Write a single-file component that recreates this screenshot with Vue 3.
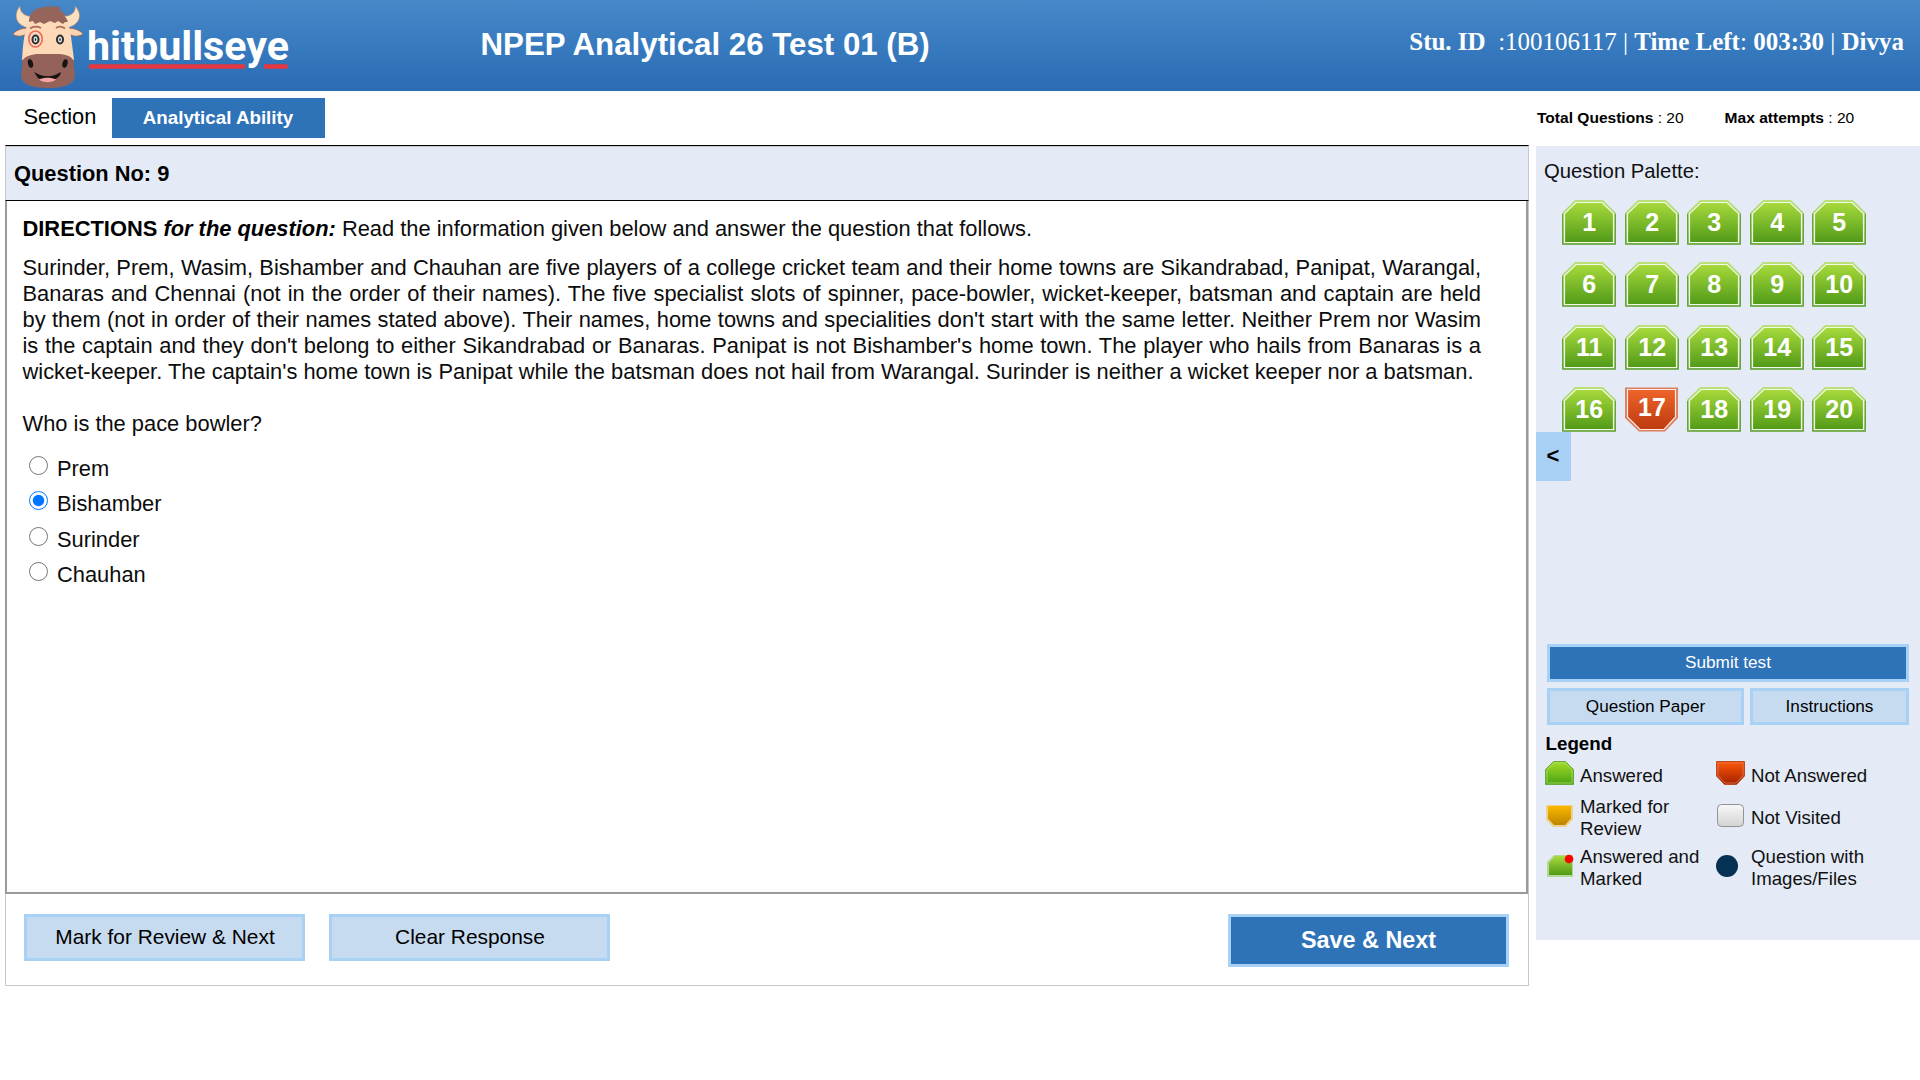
<script setup>
import { ref } from 'vue'

const questions = Array.from({ length: 20 }, (_, i) => ({
  no: i + 1,
  answered: i + 1 !== 17,
}))
const passage = [
  'Surinder, Prem, Wasim, Bishamber and Chauhan are five players of a college cricket team and their home towns are Sikandrabad, Panipat, Warangal,',
  'Banaras and Chennai (not in the order of their names). The five specialist slots of spinner, pace-bowler, wicket-keeper, batsman and captain are held',
  "by them (not in order of their names stated above). Their names, home towns and specialities don't start with the same letter. Neither Prem nor Wasim",
  "is the captain and they don't belong to either Sikandrabad or Banaras. Panipat is not Bishamber's home town. The player who hails from Banaras is a",
  "wicket-keeper. The captain's home town is Panipat while the batsman does not hail from Warangal. Surinder is neither a wicket keeper nor a batsman.",
]
const options = ['Prem', 'Bishamber', 'Surinder', 'Chauhan']
const chosen = ref('Bishamber')
</script>

<template>
  <div class="page">
    <header class="header">
      <svg class="logo" width="300" height="91" viewBox="0 0 300 91">
        <path d="M29 28C17 26 12 16 20 6C20 12 24 17 33 16L36 24Z" fill="#fbe0bf" stroke="#a9806c" stroke-width=".7" />
        <path d="M66 28C79 26 84 15 75 6C76 12 71 17 62 16L60 24Z" fill="#fbe0bf" stroke="#a9806c" stroke-width=".7" />
        <path d="M29 28C24 28 17 29 13 34C16 37 23 37 27 33Z" fill="#fcd2b1" stroke="#8e6257" stroke-width=".8" />
        <path d="M66 28C72 28 79 29 83 34C79 37 72 37 68 33Z" fill="#fcd2b1" stroke="#8e6257" stroke-width=".8" />
        <path d="M30 20C40 14 56 14 66 20C70 26 71 36 72 44L74 60H22C23 45 24 29 30 20Z" fill="#fdd9b8" />
        <path d="M29 22C29 16 31 12 35 11L34 9C37 10 39 8 41 6L41 9C44 6 47 7 51 5L50 8C54 6 57 6 61 8L59 10C62 11 64 13 66 15L63 15C66 17 67 19 68 22L65 22L63 24L58 21L55 23L50 21L44 24L40 22L35 24L33 21Z" fill="#95645a" />
        <path d="M30 28.500Q35 25 41 28M56 28Q60 25 65 28.500" fill="none" stroke="#a66c5c" stroke-width="1.800" />
        <ellipse cx="35.500" cy="39" rx="6.700" ry="8" fill="#fbd9c5" stroke="#ee6757" stroke-width="1.600" />
        <ellipse cx="35.500" cy="39.500" rx="4" ry="5" fill="#2d2d2c" />
        <ellipse cx="35.500" cy="39.500" rx="2" ry="3" fill="#e5eded" />
        <ellipse cx="35.500" cy="39.500" rx=".8" ry="1.500" fill="#2d2d2c" />
        <ellipse cx="60" cy="39.500" rx="4" ry="5" fill="#2d2d2c" />
        <ellipse cx="60" cy="39.500" rx="2" ry="3" fill="#e5eded" />
        <ellipse cx="60" cy="39.500" rx=".8" ry="1.500" fill="#2d2d2c" />
        <path d="M22 61C25 56 32 54 39 54H57C66 54 71 56 74 61C73 65 75 70 75 76C74 85 63 88 48 88C33 88 22 85 21 76C21 70 23 66 22 61Z" fill="#95625a" />
        <ellipse cx="30.500" cy="63.500" rx="2.500" ry="4.300" fill="#171313" transform="rotate(-15 30.500 63.500)" />
        <ellipse cx="65" cy="63.500" rx="2.500" ry="4.300" fill="#171313" transform="rotate(15 65 63.500)" />
        <path d="M34 72L38 74C44 77 52 77 57 74L61 72L60 75C57 79 52 81 47 81C42 81 38 79 36 75Z" fill="#171313" />
        <path d="M39 79.500C44 77 51 77 56 79.500C52 83 43 83 39 79.500Z" fill="#f4a5a3" />
        <path d="M89 66.500H245M264 66.500H287.500" stroke="#e63740" stroke-width="4.600" />
        <text class="brand" x="87" y="60" textLength="202" lengthAdjust="spacingAndGlyphs">hitbullseye</text>
      </svg>
      <h1 class="title">NPEP Analytical 26 Test 01 (B)</h1>
      <div class="student"><b>Stu. ID</b>&nbsp; :100106117 | <b>Time Left</b>: <b>003:30</b> | <b>Divya</b></div>
    </header>

    <nav class="sections">
      <span class="section-label">Section</span>
      <span class="tab">Analytical Ability</span>
      <div class="totals">
        <span><b>Total Questions</b> : 20</span>
        <span><b>Max attempts</b> : 20</span>
      </div>
    </nav>

    <div class="columns">
      <main class="panel">
        <div class="question-no">Question No: 9</div>
        <section class="question">
          <p class="directions"><b>DIRECTIONS <i>for the question:</i></b> Read the information given below and answer the question that follows.</p>
          <p class="passage"><span v-for="line in passage" :key="line">{{ line }}</span></p>
          <p class="ask">Who is the pace bowler?</p>
          <div class="options">
            <label v-for="o in options" :key="o" class="option">
              <input v-model="chosen" type="radio" name="answer" :value="o">
              <span>{{ o }}</span>
            </label>
          </div>
        </section>
        <footer class="actions">
          <button class="btn light">Mark for Review &amp; Next</button>
          <button class="btn light">Clear Response</button>
          <button class="btn save">Save &amp; Next</button>
        </footer>
      </main>

      <aside class="side">
        <svg class="defs" width="0" height="0">
          <defs>
            <linearGradient id="green" x2="0" y2="1"><stop offset="0" stop-color="#a8da3c" /><stop offset="1" stop-color="#519a18" /></linearGradient>
            <linearGradient id="red" x2="0" y2="1"><stop offset="0" stop-color="#ee652a" /><stop offset="1" stop-color="#bd3a10" /></linearGradient>
            <linearGradient id="green2" x2="0" y2="1"><stop offset="0" stop-color="#a5dc28" /><stop offset="1" stop-color="#47a213" /></linearGradient>
            <linearGradient id="red2" x2="0" y2="1"><stop offset="0" stop-color="#ff5708" /><stop offset="1" stop-color="#a12200" /></linearGradient>
            <linearGradient id="amber" x2="0" y2="1"><stop offset="0" stop-color="#fbb800" /><stop offset="1" stop-color="#bd8500" /></linearGradient>
            <linearGradient id="grey" x2="0" y2="1"><stop offset="0" stop-color="#f8f8f8" /><stop offset="1" stop-color="#d3d3d3" /></linearGradient>
            <linearGradient id="edge" x2="0" y2="1"><stop offset="0" stop-color="#bce178" /><stop offset="1" stop-color="#7db35a" /></linearGradient>
          </defs>
        </svg>
        <div class="side-title">Question Palette:</div>
        <div class="palette">
          <div v-for="q in questions" :key="q.no" class="cell">
            <svg v-if="q.answered" width="54" height="45" viewBox="0 0 54 45">
              <path d="M0 44.500V13L13 0H41L54 13V44.500Z" fill="url(#edge)" />
              <path d="M.5 14V44.200H53.500V14" fill="none" stroke="#65a63b" />
              <path d="M2.500 42.500V13.500L14 2.500H40L51.500 13.500V42.500Z" fill="url(#green)" stroke="#f2f9e8" stroke-width="1.200" />
              <text x="27.200" y="31">{{ q.no }}</text>
            </svg>
            <svg v-else width="54" height="45" viewBox="0 0 54 45">
              <path d="M0 .5H53V31L40 44.500H14L0 31Z" fill="#dc7e5c" />
              <path d="M2.500 2.500H50.500V30L39 42.500H15L2.500 30Z" fill="url(#red)" stroke="#fcece4" stroke-width="1.200" />
              <text x="27" y="29">{{ q.no }}</text>
            </svg>
          </div>
        </div>
        <button class="collapse">&lt;</button>

        <div class="side-actions">
          <button class="btn submit">Submit test</button>
          <button class="btn light paper">Question Paper</button>
          <button class="btn light instr">Instructions</button>
        </div>

        <h2 class="legend-title">Legend</h2>
        <div class="legend">
          <div class="entry">
            <svg width="30" height="24"><path d="M.5 23.500V8.500L8.500 .5H20.500L28.500 8.500V23.500Z" fill="url(#green2)" stroke="#69a83e" /><path d="M2 22V9L9 2H20L27 9V22Z" fill="none" stroke="#aadb6b" stroke-width=".8" /></svg>
            <span class="down">Answered</span>
          </div>
          <div class="entry">
            <svg width="30" height="24"><path d="M.5 .5H28.500V15L20.500 23.500H8.500L.5 15Z" fill="url(#red2)" stroke="#bd4a22" /><path d="M2 2H27V14.500L20 22H9L2 14.500Z" fill="none" stroke="#e17b50" stroke-width=".8" /></svg>
            <span class="down">Not Answered</span>
          </div>
          <div class="entry">
            <svg width="30" height="24"><path d="M1 1H28V15.500L21 23H8L1 15.500Z" fill="#ecd28c" /><path d="M3 2H26V14.500L20 21H9L3 14.500Z" fill="url(#amber)" /></svg>
            <span class="lower">Marked for<br>Review</span>
          </div>
          <div class="entry">
            <svg width="30" height="24"><rect x="1.500" y=".5" width="26" height="22" rx="4" fill="url(#grey)" stroke="#929292" /></svg>
            <span class="lower">Not Visited</span>
          </div>
          <div class="entry">
            <svg width="30" height="24"><path d="M2 23V8L9 1H28V23Z" fill="#b4d797" /><path d="M4 21V9L10 2H27V21Z" fill="url(#green)" /><circle cx="24" cy="5" r="4.300" fill="#f00" /></svg>
            <span class="nudge">Answered and<br>Marked</span>
          </div>
          <div class="entry">
            <svg width="30" height="24"><circle cx="11" cy="12" r="11" fill="#053154" /></svg>
            <span class="nudge">Question with<br>Images/Files</span>
          </div>
        </div>
      </aside>
    </div>
  </div>
</template>

<style>
body { background: #fff; }
</style>

<style scoped>
.page { box-sizing: border-box; width: 1920px; height: 1080px; overflow: hidden; background: #fff; color: #000; font-family: "Liberation Sans", Arial, sans-serif; }
.page * { box-sizing: border-box; }
.header { display: flex; height: 91px; background: linear-gradient(#4688c8, #2f72b9 78%, #2c6cb5); color: #fff; }
.logo { flex: none; }
.brand { font: 700 41px Roboto, sans-serif; fill: #fff; }
.title { flex: 1; margin: 0 0 0 180.500px; padding-top: 27px; font-size: 31.250px; line-height: 36px; white-space: nowrap; }
.student { margin-right: 16px; padding-top: 28px; font: 25px/28px "Liberation Serif", "Times New Roman", serif; white-space: nowrap; }

.sections { display: flex; align-items: flex-start; height: 54px; padding-left: 23.500px; }
.section-label { width: 88.500px; padding-top: 13px; font-size: 21.850px; line-height: 25px; }
.tab { width: 213px; height: 40px; margin-top: 7px; background: #2e72b8; color: #fff; font-weight: 700; font-size: 18.750px; line-height: 39px; text-align: center; padding-right: 1px; }
.totals { flex: none; display: flex; gap: 41px; margin-left: auto; width: 383px; padding-top: 17px; font-size: 15.550px; line-height: 20px; white-space: nowrap; }

.columns { display: flex; align-items: flex-start; }
.panel { flex: none; display: flex; flex-direction: column; width: 1524px; height: 841px; margin: 0 7px 0 5px; border: 1px solid #c8c8c8; border-top-color: #000; }
.question-no { flex: none; height: 55px; margin: 0 -1px; padding: 1px 0 0 8px; border: 1px solid #c8c8c8; border-bottom-color: #000; background: #e4ebf7; font-weight: 700; font-size: 21.850px; line-height: 52px; }
.question { flex: none; height: 693px; width: 1523px; margin-left: -1px; padding: 15px 0 0 15.500px; border: 2px solid #9a9a9a; border-top: 0; font-size: 21.870px; line-height: 26px; color: #0c0c0c; }
.question p { margin: 0; }
.question .directions { margin-bottom: 13px; }
.directions b { color: #000; }
.question .passage { width: 1458.500px; margin-bottom: 26px; }
.passage span { display: block; height: 26px; word-spacing: -1.500px; text-align: justify; text-align-last: justify; }
.passage span:last-child { width: 1451px; }
.options { display: flex; flex-direction: column; padding: 14px 0 0 6px; }
.option { display: flex; height: 35.400px; }
.option input { flex: none; width: 19px; height: 19px; margin: 5px 9.500px 0 0; }
.option span { padding-top: 5px; }
.actions { flex: 1; display: flex; align-items: flex-start; padding: 20px 19px 0 18px; }
.btn { padding: 0; border: 3px solid #a8d1f6; font-family: inherit; color: #000; white-space: nowrap; }
.light { background: #c7dbf0; }
.actions .light { width: 281px; height: 47px; margin-right: 24px; padding: 0 0 2px 1px; font-size: 20.900px; line-height: 39px; }
.actions .save { width: 281px; height: 53px; margin-left: auto; background: #2e72b8; color: #fff; font-weight: 700; font-size: 23.400px; }

.side { flex: none; width: 384px; height: 794px; margin-top: 1px; background: #e4ebf7; }
.defs { display: block; }
.side-title { padding: 13px 0 0 8px; font-size: 20.300px; line-height: 24px; color: #111; }
.palette { display: grid; grid-template-columns: repeat(5, 62.500px); grid-auto-rows: 62.400px; height: 232px; margin: 17px 0 0 26px; }
.cell svg { display: block; }
.cell text { fill: #fff; font-size: 25px; font-weight: 700; text-anchor: middle; }
.collapse { display: block; width: 35px; height: 49px; padding: 0 1px 1px 0; border: 0; background: #a8d0f5; font: 700 22px/48px "Liberation Sans", sans-serif; color: #000; }
.side-actions { display: grid; grid-template-columns: 197px 159px; grid-template-rows: 38px 37px; gap: 6px; margin: 163px 0 0 11px; }
.side-actions .btn { font-size: 17.200px; }
.side-actions .submit { grid-column: 1 / 3; background: #2e72b8; color: #fff; padding-bottom: 2px; }
.legend-title { margin: 8px 0 0 9.500px; font-size: 18.750px; line-height: 22px; }
.legend { display: grid; grid-template-columns: 171px 1fr; grid-template-rows: 42px 44px 56px; margin: -3px 0 0 9px; }
.entry { display: flex; align-items: center; font-size: 18.670px; line-height: 22px; color: #111; }
.entry svg { flex: none; margin-right: 5px; }
.entry span { white-space: nowrap; }
.entry .down { padding-top: 6px; }
.entry .lower { padding-top: 3px; }
.entry .nudge { padding-top: 4px; }
</style>
